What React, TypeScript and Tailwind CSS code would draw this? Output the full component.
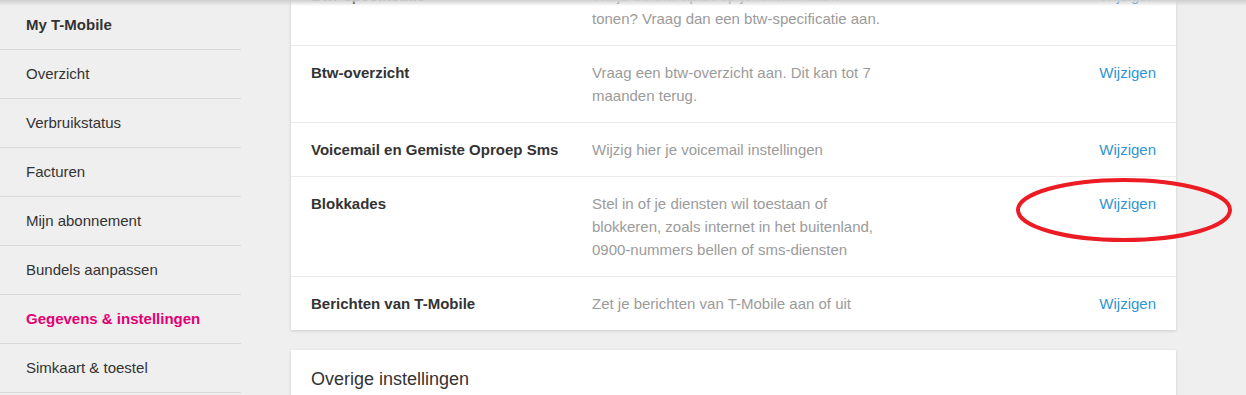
import React from "react";

const MENU = [
  { label: "My T-Mobile", strong: true },
  { label: "Overzicht" },
  { label: "Verbruikstatus" },
  { label: "Facturen" },
  { label: "Mijn abonnement" },
  { label: "Bundels aanpassen" },
  { label: "Gegevens & instellingen", active: true },
  { label: "Simkaart & toestel" },
];

const ROWS = [
  {
    title: "Btw-specificatie",
    desc: "Wil je de btw apart op je factuur laten\ntonen? Vraag dan een btw-specificatie aan.",
  },
  {
    title: "Btw-overzicht",
    desc: "Vraag een btw-overzicht aan. Dit kan tot 7 maanden terug.",
  },
  {
    title: "Voicemail en Gemiste Oproep Sms",
    desc: "Wijzig hier je voicemail instellingen",
  },
  {
    title: "Blokkades",
    desc: "Stel in of je diensten wil toestaan of blokkeren, zoals internet in het buitenland, 0900-nummers bellen of sms-diensten",
    circled: true,
  },
  {
    title: "Berichten van T-Mobile",
    desc: "Zet je berichten van T-Mobile aan of uit",
  },
];

function Row({ title, desc, circled }: { title: string; desc: string; circled?: boolean }) {
  return (
    <div className="grid grid-cols-[281px_292px_1fr] px-5 py-[15px] border-b border-[#ebebeb] last:border-b-0 text-[15px] leading-[23px]">
      <div className="font-bold text-[#333]">{title}</div>
      <div className="text-[#9b9b9b] whitespace-pre-line">{desc}</div>
      <div className="relative text-right">
        <a className="text-[#2f95d3] cursor-pointer">Wijzigen</a>
        {circled && (
          // rode markering uit de screenshot
          <svg
            className="absolute left-[132px] top-[-15px] pointer-events-none overflow-visible"
            width="220"
            height="66"
            viewBox="0 0 220 66"
          >
            <ellipse cx="108" cy="33" rx="106" ry="30" fill="none" stroke="#ec1c24" strokeWidth="4" />
          </svg>
        )}
      </div>
    </div>
  );
}

export default function App() {
  return (
    <div className="relative h-[395px] overflow-hidden bg-[#efefef] font-['Liberation_Sans',Arial,sans-serif]">
      {/* schaduw van de header */}
      <div className="absolute inset-x-0 top-0 h-[6px] bg-gradient-to-b from-[#cfcfcf] to-transparent z-10" />

      <div className="flex">
        {/* menu */}
        <nav className="w-[241px] shrink-0 mt-px">
          {MENU.map((m) => (
            <div
              key={m.label}
              className={`h-[49px] flex items-center pl-[26px] border-b border-[#d9d9d9] text-[15px] ${
                m.active
                  ? "font-bold text-[#e20074]"
                  : m.strong
                  ? "font-bold text-[#333]"
                  : "text-[#333]"
              }`}
            >
              {m.label}
            </div>
          ))}
        </nav>

        {/* inhoud */}
        <main className="ml-[50px] w-[885px] -mt-[31px] flex flex-col gap-5">
          <section className="bg-white shadow-[0_1px_3px_rgba(0,0,0,0.15)]">
            {ROWS.map((r) => (
              <Row key={r.title} {...r} />
            ))}
          </section>

          <section className="bg-white shadow-[0_1px_3px_rgba(0,0,0,0.15)] px-5 pt-4 h-[120px]">
            <h3 className="text-[18px] leading-[26px] text-[#333]">Overige instellingen</h3>
          </section>
        </main>
      </div>
    </div>
  );
}
